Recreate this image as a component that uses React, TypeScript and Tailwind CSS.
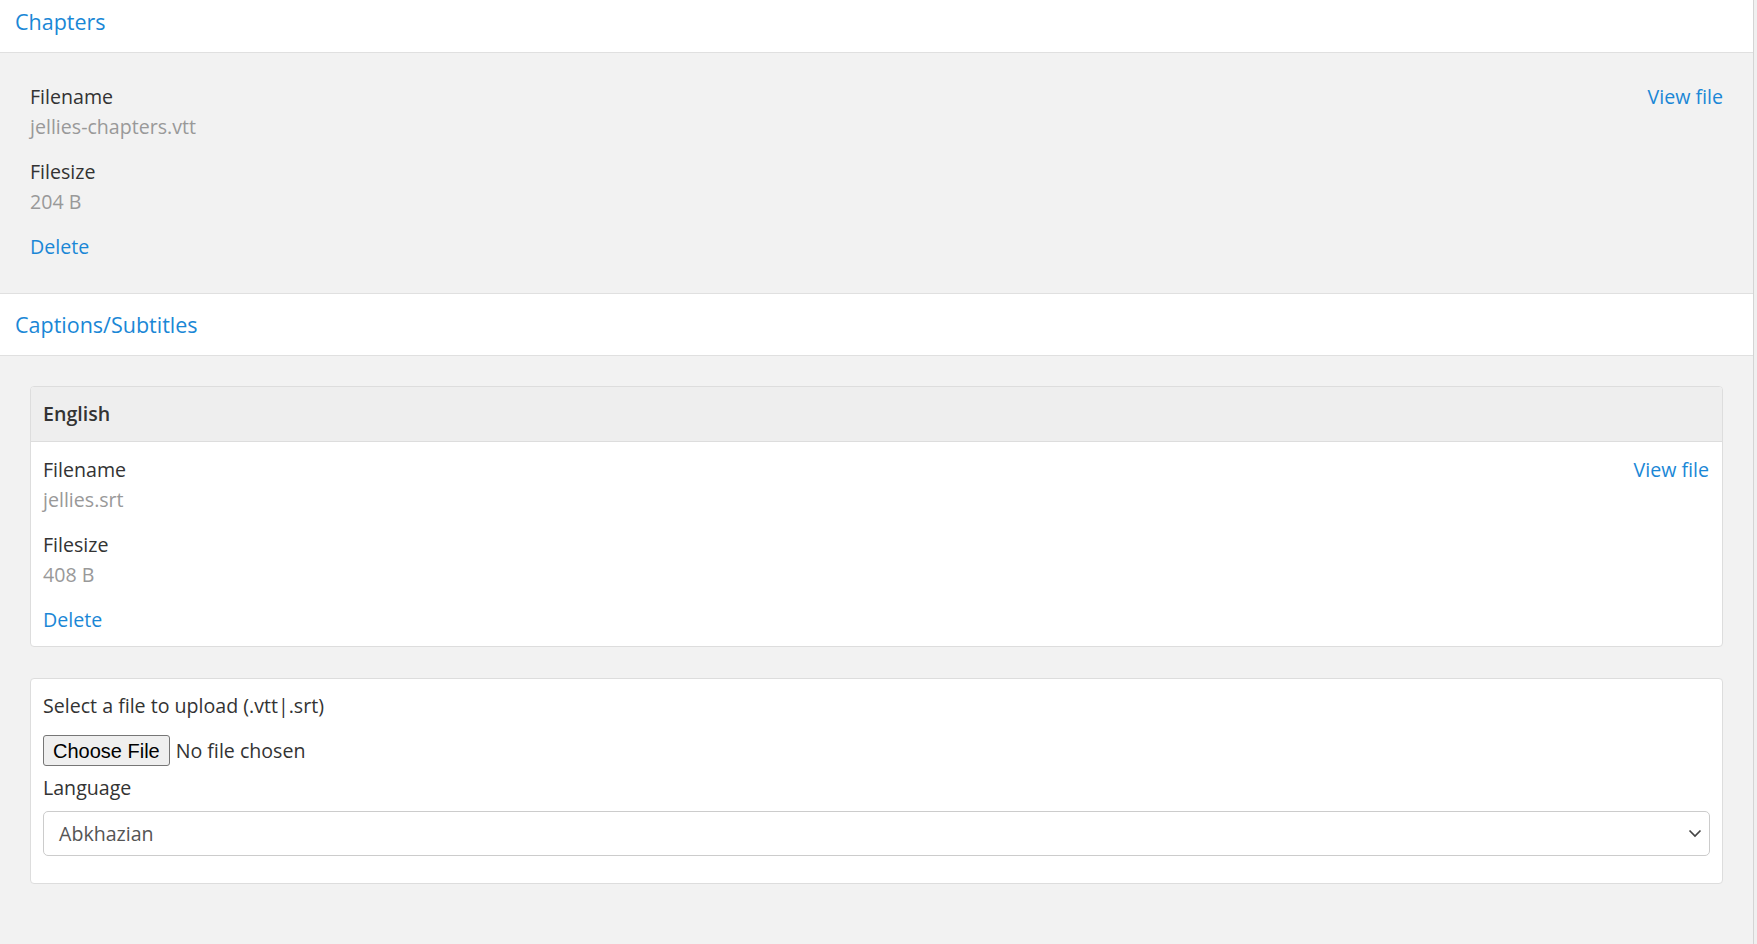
import React from "react";

const font = { fontFamily: '"Open Sans", "Liberation Sans", sans-serif' };

function FileInfo({ name, size, pad }: { name: string; size: string; pad: string }) {
  return (
    <div className={pad}>
      <div className="flex justify-between">
        <div>
          <div className="text-[#333]">Filename</div>
          <div className="text-[#999]">{name}</div>
        </div>
        <a className="text-[#1a87d6] cursor-pointer">View file</a>
      </div>
      <div className="mt-[15px] text-[#333]">Filesize</div>
      <div className="text-[#999]">{size}</div>
      <div className="mt-[15px]">
        <a className="text-[#1a87d6] cursor-pointer">Delete</a>
      </div>
    </div>
  );
}

export default function App() {
  return (
    <div className="flex min-h-[944px] bg-[#f0f0f0] text-[19.6px] leading-[30px]" style={font}>
      <div className="w-[1754px] shrink-0 border-r border-[#d4d4d4] bg-[#f2f2f2] min-h-[944px]">
        <div className="bg-white border-b border-[#e0e0e0] pl-[15px] pt-[6px] pb-[15px] text-[21.5px] leading-[31px] text-[#1a87d6]">
          Chapters
        </div>
        <FileInfo name="jellies-chapters.vtt" size="204 B" pad="pl-[30px] pr-[30px] pt-[29px] pb-[31px]" />
        <div className="bg-white border-y border-[#e0e0e0] pl-[15px] pt-[15px] pb-[15px] text-[21.5px] leading-[31px] text-[#1a87d6]">
          Captions/Subtitles
        </div>
        <div className="px-[30px] pt-[30px] pb-[40px]">
          <div className="bg-white border border-[#dddddd] rounded-[4px] overflow-hidden">
            <div className="bg-[#eeeeee] border-b border-[#dddddd] pl-[12px] pt-[12px] pb-[12px] font-semibold text-[#333]">
              English
            </div>
            <FileInfo name="jellies.srt" size="408 B" pad="pl-[12px] pr-[13px] pt-[13px] pb-[11px]" />
          </div>
          <div className="mt-[31px] bg-white border border-[#dddddd] rounded-[4px] pl-[12px] pr-[12px] pt-[12px] pb-[27px]">
            <div className="text-[#333]">Select a file to upload (.vtt|.srt)</div>
            <div className="mt-[14px] flex items-center h-[31px]">
              <button
                className="h-[31px] px-[9px] border border-[#767676] rounded-[3px] bg-[#efefef] text-black text-[20px] leading-[26px]"
                style={{ fontFamily: '"Liberation Sans", Arial, sans-serif' }}
              >
                Choose File
              </button>
              <span className="ml-[6px] text-[#333]">No file chosen</span>
            </div>
            <div className="mt-[7px] text-[#333]">Language</div>
            <div className="mt-[8px] relative h-[45px] border border-[#cccccc] rounded-[5px] bg-white flex items-center pl-[15px] text-[#555]">
              Abkhazian
              <svg
                className="absolute right-[7px] top-[17px]"
                width="14"
                height="9"
                viewBox="0 0 14 9"
                fill="none"
              >
                <path d="M1.5 1.5 L7 7 L12.5 1.5" stroke="#444" strokeWidth="1.7" />
              </svg>
            </div>
          </div>
        </div>
      </div>
    </div>
  );
}
